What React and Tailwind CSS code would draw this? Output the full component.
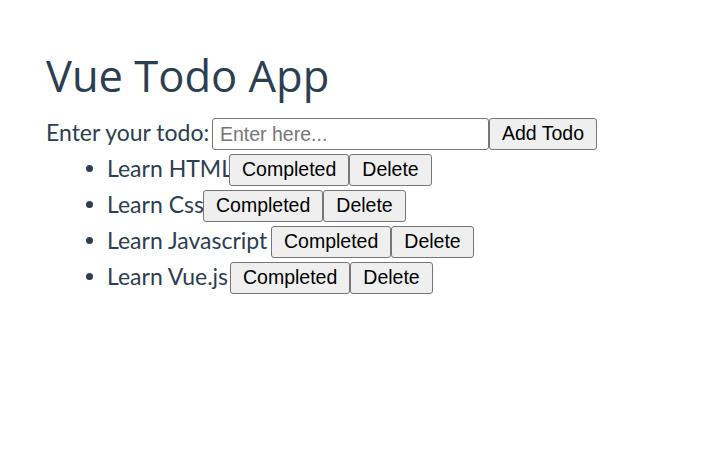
export default function App() {
  const todos = [
    { text: "Learn HTML", w: "w-[122px]" },
    { text: "Learn Css", w: "w-[96px]" },
    { text: "Learn Javascript", w: "w-[164px]" },
    { text: "Learn Vue.js", w: "w-[123px]" },
  ];
  const btn =
    "h-[32px] px-[12px] border border-[#767676] rounded-[3px] bg-[#efefef] text-black text-[19.5px] leading-none [font-family:'Liberation_Sans',Arial,sans-serif] whitespace-nowrap";
  return (
    <div className="min-h-screen bg-white pl-[46px] pt-[51px] text-[#2c3e50] [font-family:Lato,'Open_Sans',sans-serif]">
      <h1 className="text-[43.5px] leading-[50px] font-normal mb-[15px] [font-family:'Open_Sans',sans-serif]">Vue Todo App</h1>
      <div className="flex items-center h-[36px] text-[23px]">
        <span className="w-[166px] whitespace-nowrap pb-[3px]">Enter your todo:</span>
        <input
          type="text"
          placeholder="Enter here..."
          className="w-[277px] h-[32px] border border-[#767676] rounded-[3px] px-[7px] text-[19.5px] text-black placeholder:text-[#757575] [font-family:'Liberation_Sans',Arial,sans-serif] outline-none"
        />
        <button className={btn}>Add Todo</button>
      </div>
      <ul className="pl-[40px]">
        {todos.map((t) => (
          <li key={t.text} className="flex items-center h-[36px] text-[23px]">
            <span className="w-[7px] h-[7px] rounded-full bg-[#2c3e50] mb-[4px] mr-[14px] shrink-0"></span>
            <span className={`${t.w} whitespace-nowrap pb-[3px]`}>{t.text}</span>
            <button className={btn}>Completed</button>
            <button className={btn}>Delete</button>
          </li>
        ))}
      </ul>
    </div>
  );
}
